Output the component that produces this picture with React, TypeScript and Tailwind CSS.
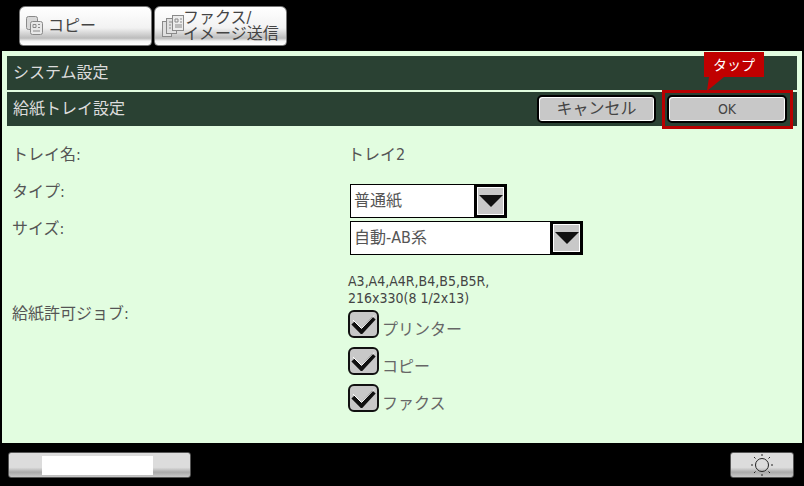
const font = "font-['DejaVu_Sans_Condensed','DejaVu_Sans','Noto_Sans_CJK_JP',sans-serif]";

function CopyIcon() {
  return (
    <svg width="18" height="20" viewBox="0 0 18 20" fill="none" stroke="#8a8a8a">
      <rect x="0.5" y="0.5" width="11" height="13" rx="2" fill="#d8d8d8" />
      <rect x="4.5" y="5.5" width="12" height="13" rx="2" fill="#e8e8e8" />
      <path d="M7 8.5h3v3H7zM12 8.5h2M12 11.5h2M7 15h7" />
    </svg>
  );
}

function FaxIcon() {
  return (
    <svg width="24" height="24" viewBox="0 0 24 24" fill="none" stroke="#8a8a8a">
      <rect x="1.5" y="7.5" width="9" height="15" fill="#e0e0e0" />
      <rect x="5.5" y="4.5" width="10" height="15" fill="#e0e0e0" />
      <rect x="11.5" y="1.5" width="11" height="15" fill="#ececec" />
      <path d="M14 5h3v3h-3zM19 5h2M19 8h2M14 11h7M14 13h7M8 8h3M8 11h2M8 14h2" />
    </svg>
  );
}

function Tab({ children, icon }: { children: React.ReactNode; icon: React.ReactNode }) {
  return (
    <div className="flex h-10 w-[133px] items-center gap-[4px] rounded-t-md rounded-b-sm border border-[#777] bg-[linear-gradient(#ffffff_0%,#f2f2f2_55%,#bcbcbc_82%,#f4f4f4_90%,#ffffff_100%)] pl-[6px] text-[#444]">
      {icon}
      {children}
    </div>
  );
}

function Select({ label, width }: { label: string; width: string }) {
  return (
    <div className={`flex h-[34px] items-stretch border border-black bg-white ${width}`}>
      <div className="flex flex-1 items-center pl-[3px] text-base text-[#555]">{label}</div>
      <div className="-my-px -mr-px flex w-[33px] items-center justify-center border-[3px] border-black bg-[#c8c8c8] outline-1 -outline-offset-4 outline-white">
        <svg width="24" height="12" viewBox="0 0 24 12">
          <path d="M0 0h24L12 12z" fill="#111" />
        </svg>
      </div>
    </div>
  );
}

function Check({ label }: { label: string }) {
  return (
    <div className="flex h-[37px] items-start">
      <div className="flex h-[28px] w-[31px] items-center justify-center rounded-md border-2 border-[#111] bg-[#c8c8c8]">
        <svg width="25" height="19" viewBox="0 0 25 19" fill="none">
          <path d="M2 8l8.5 8.5L23 3" stroke="#111" strokeWidth="4.5" />
          <path d="M2 5l8.5 8.5L23 0.5" stroke="#fff" strokeWidth="1" />
        </svg>
      </div>
      <span className="mt-[10px] ml-[3px] text-base leading-5 text-[#666]">{label}</span>
    </div>
  );
}

function ActionButton({ children, width }: { children: React.ReactNode; width: string }) {
  return (
    <div className={`flex h-7 items-center justify-center rounded-[5px] border-2 border-black bg-[#c8c8c8] text-[#444] shadow-[inset_1px_1px_0_#fff,inset_-1px_-1px_0_#fff] ${width}`}>
      {children}
    </div>
  );
}

export default function App() {
  return (
    <div className={`flex h-[486px] w-[804px] flex-col overflow-hidden bg-black ${font}`}>
      {/* Tabs */}
      <div className="flex h-[51px] gap-[2px] pt-[6px] pl-[19px]">
        <Tab icon={<CopyIcon />}>
          <span className="text-base">コピー</span>
        </Tab>
        <Tab icon={<FaxIcon />}>
          <span className="-ml-[6px] text-base leading-[16px]">
            ファクス/
            <br />
            イメージ送信
          </span>
        </Tab>
      </div>

      {/* Panel */}
      <div className="relative mx-[2px] flex h-[392px] flex-col bg-[#e2fde0] px-[5px] pt-[5px]">
        <div className="flex h-[34px] items-center bg-[#2a4133] pl-[6px] text-base text-[#dcdcdc]">システム設定</div>
        <div className="mt-[2px] flex h-[34px] items-center justify-between bg-[#2a4133] pr-[10px] pl-[6px] text-base text-[#dcdcdc]">
          <span>給紙トレイ設定</span>
          <div className="flex gap-[11px]">
            <ActionButton width="w-[119px]">
              <span className="text-base">キャンセル</span>
            </ActionButton>
            <ActionButton width="w-[120px]">
              <span className="text-sm">OK</span>
            </ActionButton>
          </div>
        </div>

        {/* Callout */}
        <div className="absolute top-[39px] left-[660px] h-[39px] w-[131px] border-[3px] border-[#b80000]" />
        <div className="absolute top-[1px] left-[702px] flex h-[25px] w-[60px] items-center justify-center bg-[#c00000] text-sm text-white">
          タップ
        </div>
        <svg className="absolute top-[26px] left-[704px]" width="20" height="14" viewBox="0 0 20 14">
          <path d="M3 0h15L1 14z" fill="#c00000" />
        </svg>

        {/* Form */}
        <div className="mt-[19px] flex text-base text-[#555]">
          <div className="flex w-[343px] flex-col pl-[5px]">
            <div className="flex h-5 items-center">トレイ名:</div>
            <div className="mt-[17px] flex h-5 items-center">タイプ:</div>
            <div className="mt-[17px] flex h-5 items-center">サイズ:</div>
            <div className="mt-[65px] flex h-5 items-center">給紙許可ジョブ:</div>
          </div>
          <div className="flex flex-col">
            <div className="-ml-[2px] flex h-5 items-center">トレイ2</div>
            <div className="mt-[19px] flex flex-col gap-[3px]">
              <Select label="普通紙" width="w-[157px]" />
              <Select label="自動-AB系" width="w-[233px]" />
            </div>
            <div className="mt-[18px] -ml-[2px] text-sm leading-[17px] text-[#444]">
              A3,A4,A4R,B4,B5,B5R,
              <br />
              216x330(8 1/2x13)
            </div>
            <div className="mt-[3px] -ml-[2px] flex flex-col">
              <Check label="プリンター" />
              <Check label="コピー" />
              <Check label="ファクス" />
            </div>
          </div>
        </div>
      </div>

      {/* Bottom bar */}
      <div className="flex items-start justify-between pt-[9px] pr-[10px] pl-[8px]">
        <div className="flex h-[26px] w-[183px] justify-center rounded-[3px] border border-[#555] bg-[linear-gradient(#dcdcdc_0%,#dcdcdc_60%,#aaaaaa_80%,#c8c8c8_100%)] pt-[3px] pr-[4px]">
          <div className="h-[19px] w-[111px] bg-white" />
        </div>
        <div className="flex h-[26px] w-[64px] items-center justify-center rounded-[3px] border border-[#555] bg-[linear-gradient(#dcdcdc_0%,#dcdcdc_60%,#aaaaaa_80%,#c8c8c8_100%)]">
          <svg width="22" height="22" viewBox="0 0 22 22" fill="none" stroke="#222">
            <circle cx="11" cy="11" r="6.5" />
            <path d="M11 0v2M11 20v2M0 11h2M20 11h2M3 3l1.5 1.5M19 3l-1.5 1.5M3 19l1.5-1.5M19 19l-1.5-1.5" />
          </svg>
        </div>
      </div>
    </div>
  );
}
